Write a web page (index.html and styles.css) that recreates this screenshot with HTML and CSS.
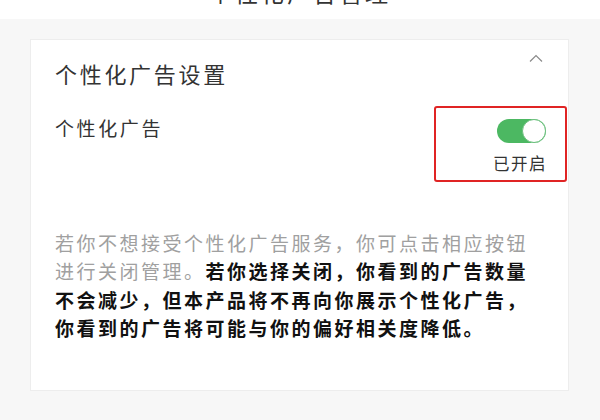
FILE: index.html
```html
<!DOCTYPE html>
<html lang="zh-CN">
<head>
    <meta charset="UTF-8">
    <meta name="viewport" content="width=device-width, initial-scale=1.0">
    <title>个性化广告管理</title>
    <link rel="stylesheet" href="styles.css">
</head>
<body>

<div class="top-bar">
    <h1 class="page-title">个性化广告管理</h1>
</div>

<div class="main">
    <div class="card">
        <div class="card-head">
            <h2 class="card-title">个性化广告设置</h2>
            <svg class="chevron" width="14" height="8" viewBox="0 0 14 8">
                <polyline points="1,7.5 7,1.5 13,7.5" fill="none" stroke="#8a8a8a" stroke-width="1.2"/>
            </svg>
        </div>

        <div class="setting-row">
            <span class="setting-label">个性化广告</span>
            <div class="switch-box">
                <div class="switch on">
                    <span class="knob"></span>
                </div>
                <span class="switch-state">已开启</span>
            </div>
        </div>

        <p class="desc">
            <span class="muted">若你不想接受个性化广告服务，你可点击相应按钮进行关闭管理。</span><strong>若你选择关闭，你看到的广告数量不会减少，但本产品将不再向你展示个性化广告，你看到的广告将可能与你的偏好相关度降低。</strong>
        </p>
    </div>
</div>

</body>
</html>
```

FILE: styles.css
```css
* {
    box-sizing: border-box;
}
body {
    margin: 0;
    padding: 0;
    background-color: #f7f7f7;
    font-family: "Noto Sans CJK SC", "Noto Sans", sans-serif;
    color: #333;
    text-spacing-trim: space-all;
}
.top-bar {
    height: 19px;
    background-color: #fff;
    overflow: hidden;
    text-align: center;
}
.page-title {
    margin: -20px 0 0;
    font-size: 23px;
    line-height: 24px;
    letter-spacing: 3px;
    font-weight: normal;
    color: #333;
}
.main {
    padding: 20px 31px 0 30px;
}
.card {
    height: 352px;
    background-color: #fff;
    border: 1px solid #ededed;
    padding: 18px 0 0 24px;
}
.card-head {
    display: flex;
    justify-content: space-between;
    align-items: flex-start;
    padding-right: 25px;
}
.card-title {
    margin: 0;
    font-size: 22px;
    line-height: 30px;
    letter-spacing: 2.7px;
    font-weight: normal;
    color: #333;
}
.chevron {
    display: block;
    margin-top: -4px;
}
.setting-row {
    display: flex;
    justify-content: space-between;
    align-items: flex-start;
    margin-top: 18px;
    padding-right: 1px;
}
.setting-label {
    margin-top: 8px;
    font-size: 19px;
    line-height: 28px;
    letter-spacing: 2.6px;
}
.switch-box {
    width: 133px;
    display: flex;
    flex-direction: column;
    align-items: flex-end;
    border: 2px solid #e02424;
    border-radius: 3px;
    padding: 11px 19px 5px 0;
}
.switch {
    width: 49px;
    height: 24px;
    border-radius: 12px;
    background-color: #4cb862;
    position: relative;
}
.switch .knob {
    position: absolute;
    top: 0;
    right: 0;
    width: 24px;
    height: 24px;
    border-radius: 50%;
    background-color: #fff;
    border: 1px solid #6cbf7e;
}
.switch-state {
    margin-top: 8px;
    margin-right: -1px;
    font-size: 16.5px;
    line-height: 24px;
    letter-spacing: 1.5px;
    color: #333;
}
.desc {
    margin: 47px 0 0;
    padding-right: 30px;
    font-size: 19px;
    line-height: 28.3px;
    letter-spacing: 2.5px;
}
.desc .muted {
    color: #a0a0a0;
}
.desc strong {
    color: #111;
    font-weight: bold;
}
```
